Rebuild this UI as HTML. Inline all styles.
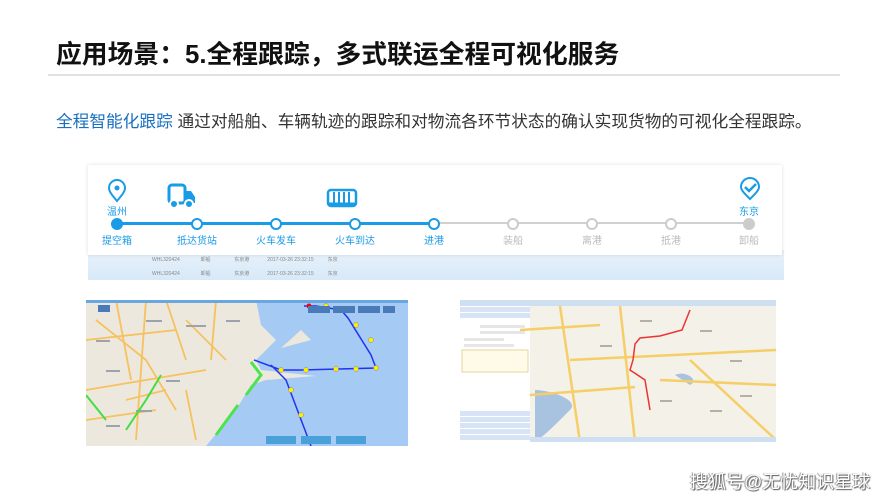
<!DOCTYPE html>
<html><head><meta charset="utf-8"><style>
body{margin:0;width:889px;height:500px;background:#fff;position:relative;overflow:hidden;font-family:"Liberation Sans","Noto Sans CJK SC",sans-serif}
.a{position:absolute}
.t{left:56px;top:34px;font-size:25.8px;font-weight:bold;color:#111;white-space:nowrap}
.ln{left:48px;top:74px;width:792px;height:2px;background:#e2e2e2}
.s{left:56px;top:108px;font-size:16.7px;color:#333;white-space:nowrap}
.s b{color:#1a6fc0;font-weight:normal}
.bg{left:88px;top:250px;width:696px;height:30px;background:linear-gradient(#e8f2fb,#d7e9f8)}
.row{font-size:5px;color:#888}
.panel{left:88px;top:165px;width:694px;height:90px;background:#fff;box-shadow:0 0 4px rgba(0,0,0,.12)}
.n{width:8px;height:8px;border:2px solid #1a9be6;border-radius:50%;background:#fff;top:218px}
.g{border-color:#ccc}
.lb{top:232px;font-size:10px;color:#1a9be6;width:60px;text-align:center;white-space:nowrap}
.lg{color:#bbb}
.wm{left:690px;top:468px;font-size:18px;color:#fff;text-shadow:1px 1px 1px #555,-1px 0 1px #888;white-space:nowrap}
</style></head><body>
<div class="a t">应用场景：5.全程跟踪，多式联运全程可视化服务</div>
<div class="a ln"></div>
<div class="a s"><b>全程智能化跟踪</b> 通过对船舶、车辆轨迹的跟踪和对物流各环节状态的确认实现货物的可视化全程跟踪。</div>
<div class="a bg"></div>
<div class="a row" style="left:152px;top:256px">WHL320424 &nbsp;&nbsp;&nbsp;&nbsp;&nbsp;&nbsp;&nbsp;&nbsp;&nbsp;&nbsp;&nbsp;&nbsp;&nbsp; 卸船 &nbsp;&nbsp;&nbsp;&nbsp;&nbsp;&nbsp;&nbsp;&nbsp;&nbsp;&nbsp;&nbsp;&nbsp;&nbsp;&nbsp;&nbsp; 东京港 &nbsp;&nbsp;&nbsp;&nbsp;&nbsp;&nbsp;&nbsp;&nbsp;&nbsp;&nbsp;&nbsp; 2017-03-26 23:32:15 &nbsp;&nbsp;&nbsp;&nbsp;&nbsp;&nbsp;&nbsp;&nbsp; 东京</div>
<div class="a row" style="left:152px;top:270px">WHL320424 &nbsp;&nbsp;&nbsp;&nbsp;&nbsp;&nbsp;&nbsp;&nbsp;&nbsp;&nbsp;&nbsp;&nbsp;&nbsp; 卸船 &nbsp;&nbsp;&nbsp;&nbsp;&nbsp;&nbsp;&nbsp;&nbsp;&nbsp;&nbsp;&nbsp;&nbsp;&nbsp;&nbsp;&nbsp; 东京港 &nbsp;&nbsp;&nbsp;&nbsp;&nbsp;&nbsp;&nbsp;&nbsp;&nbsp;&nbsp;&nbsp; 2017-03-26 23:32:15 &nbsp;&nbsp;&nbsp;&nbsp;&nbsp;&nbsp;&nbsp;&nbsp; 东京</div>
<div class="a panel"></div>
<div class="a" style="left:117px;top:222px;width:317px;height:3px;background:#1a9be6"></div>
<div class="a" style="left:434px;top:222px;width:315px;height:2px;background:#d0d0d0"></div>
<div class="a n" style="left:111px;background:#1a9be6"></div>
<div class="a n" style="left:191px"></div><div class="a n" style="left:270px"></div><div class="a n" style="left:349px"></div><div class="a n" style="left:428px"></div>
<div class="a n g" style="left:507px"></div><div class="a n g" style="left:586px"></div><div class="a n g" style="left:665px"></div><div class="a n g" style="left:743px;background:#ccc"></div>
<div class="a lb" style="left:87px">提空箱</div><div class="a lb" style="left:167px">抵达货站</div><div class="a lb" style="left:246px">火车发车</div><div class="a lb" style="left:325px">火车到达</div><div class="a lb" style="left:404px">进港</div>
<div class="a lb lg" style="left:483px">装船</div><div class="a lb lg" style="left:562px">离港</div><div class="a lb lg" style="left:641px">抵港</div><div class="a lb lg" style="left:719px">卸船</div>
<div class="a lb" style="left:87px;top:203px">温州</div><div class="a lb" style="left:719px;top:203px">东京</div>
<svg class="a" style="left:106px;top:179px" width="22" height="24" viewBox="0 0 22 24"><path d="M11 22C5 15 3 12 3 9a8 8 0 0 1 16 0c0 3-2 6-8 13z" fill="none" stroke="#1a9be6" stroke-width="2"/><circle cx="11" cy="9" r="2.5" fill="#1a9be6"/></svg>
<svg class="a" style="left:166px;top:183px" width="32" height="28" viewBox="0 0 32 28"><rect x="3" y="2" width="16" height="18" rx="3" fill="none" stroke="#1a9be6" stroke-width="3"/><path d="M20 8h5l4 6v6H20z" fill="#1a9be6"/><circle cx="8" cy="21" r="4" fill="#1a9be6" stroke="#fff" stroke-width="2"/><circle cx="23" cy="21" r="4" fill="#1a9be6" stroke="#fff" stroke-width="2"/></svg>
<svg class="a" style="left:326px;top:188px" width="32" height="22" viewBox="0 0 32 22"><rect x="2" y="2" width="28" height="16" rx="3" fill="none" stroke="#1a9be6" stroke-width="2.5"/><path d="M8 4v11M13 4v11M18 4v11M23 4v11" stroke="#1a9be6" stroke-width="2"/><path d="M2 16h28" stroke="#1a9be6" stroke-width="3"/></svg>
<svg class="a" style="left:738px;top:177px" width="24" height="24" viewBox="0 0 24 24"><path d="M12 22C6 16 3 13 3 10a9 9 0 0 1 18 0c0 3-3 6-9 12z" fill="none" stroke="#1a9be6" stroke-width="2"/><path d="M7 10l4 4 7-7" fill="none" stroke="#1a9be6" stroke-width="2.5"/></svg>

<svg class="a" style="left:86px;top:300px" width="322" height="146" viewBox="0 0 322 146">
<rect width="322" height="146" fill="#ece8de"/>
<path d="M160 0H322V146H120L150 110 165 85 180 80 230 76 175 70 170 60 190 40 175 25 170 0z" fill="#a5cbf5"/>
<path d="M195 48l30-8 -10-10z" fill="#ece8de"/>
<g stroke="#f6c15f" stroke-width="1.8" fill="none">
<path d="M10 20L60 60 90 110M30 0L45 80M0 90L120 70M80 0L100 60M40 100l40-10M100 20L140 60M0 40L90 30M60 0L50 140M130 0L125 60M0 120L70 110M100 90L110 140"/>
</g>
<g fill="#9ca3ad"><rect x="10" y="40" width="14" height="2"/><rect x="60" y="20" width="16" height="2"/><rect x="100" y="25" width="20" height="2"/><rect x="20" y="70" width="14" height="2"/><rect x="80" y="80" width="14" height="2"/><rect x="50" y="110" width="16" height="2"/><rect x="140" y="20" width="14" height="2"/><rect x="20" y="125" width="14" height="2"/></g>
<path d="M165 62L175 75 160 95M152 105L130 135" stroke="#4ce44c" stroke-width="3" fill="none"/>
<path d="M40 130L60 100 75 75M0 95L20 120" stroke="#44dd44" stroke-width="2" fill="none"/>
<path d="M168 60L195 70 215 70 290 68 285 55 262 18 255 10 230 6 218 6M185 65L200 80 225 146" stroke="#2233ee" stroke-width="1.5" fill="none"/>
<g fill="#ffee00" stroke="#888" stroke-width=".5"><circle cx="195" cy="70" r="2.5"/><circle cx="220" cy="70" r="2.5"/><circle cx="250" cy="69" r="2.5"/><circle cx="270" cy="69" r="2.5"/><circle cx="290" cy="68" r="2.5"/><circle cx="285" cy="40" r="2.5"/><circle cx="270" cy="25" r="2.5"/><circle cx="240" cy="6" r="2.5"/><circle cx="205" cy="90" r="2.5"/><circle cx="215" cy="115" r="2.5"/></g>
<circle cx="223" cy="6" r="2.5" fill="#f00"/>
<rect x="0" y="0" width="322" height="3" fill="#6aa6df"/>
<g fill="#4a7ab8"><rect x="222" y="6" width="22" height="7"/><rect x="247" y="6" width="22" height="7"/><rect x="272" y="6" width="22" height="7"/><rect x="297" y="6" width="12" height="7"/><rect x="12" y="5" width="12" height="7"/></g>
<g fill="#4aa0d8"><rect x="180" y="136" width="30" height="8"/><rect x="215" y="136" width="30" height="8"/><rect x="250" y="136" width="30" height="8"/></g>
</svg>

<svg class="a" style="left:460px;top:300px" width="316" height="142" viewBox="0 0 316 142">
<rect width="316" height="142" fill="#f4f1e9"/>
<rect width="70" height="142" fill="#fff"/>
<rect width="316" height="6" fill="#cfdff2"/>
<g fill="#d6e4f5"><rect y="7" width="70" height="5"/><rect y="13" width="70" height="5"/><rect y="111" width="70" height="5"/><rect y="117" width="70" height="5"/><rect y="123" width="70" height="5"/><rect y="129" width="70" height="5"/><rect y="135" width="70" height="5"/></g>
<g fill="#e6e6e6"><rect x="20" y="25" width="45" height="3"/><rect x="20" y="31" width="45" height="3"/><rect x="4" y="38" width="40" height="3"/><rect x="4" y="44" width="50" height="3"/></g>
<rect x="2" y="50" width="66" height="22" fill="#fffbe8" stroke="#e4d59a"/>
<path d="M75 90C90 90 120 100 110 110 90 130 80 140 75 140z" fill="#a8c3e0"/>
<path d="M215 75C225 70 240 80 230 85z" fill="#a8c3e0"/>
<path d="M70 95L175 87M100 6L120 142M160 6L175 142M110 60L316 50M230 60L316 140M200 80L316 85M60 30L140 25" stroke="#f6ce68" stroke-width="2.5" fill="none"/>
<g fill="#b5b0a5"><rect x="180" y="20" width="12" height="2"/><rect x="240" y="30" width="12" height="2"/><rect x="270" y="60" width="12" height="2"/><rect x="200" y="100" width="12" height="2"/><rect x="250" y="110" width="12" height="2"/><rect x="140" y="45" width="12" height="2"/><rect x="280" y="95" width="12" height="2"/></g>
<path d="M230 10L222 30 200 36 180 38 175 44 173 60 170 70 185 80 190 110" stroke="#ee3333" stroke-width="1.5" fill="none"/>
<rect x="70" y="137" width="246" height="5" fill="#cfdff2"/>
</svg>
<div class="a wm">搜狐号@无忧知识星球</div>
</body></html>
